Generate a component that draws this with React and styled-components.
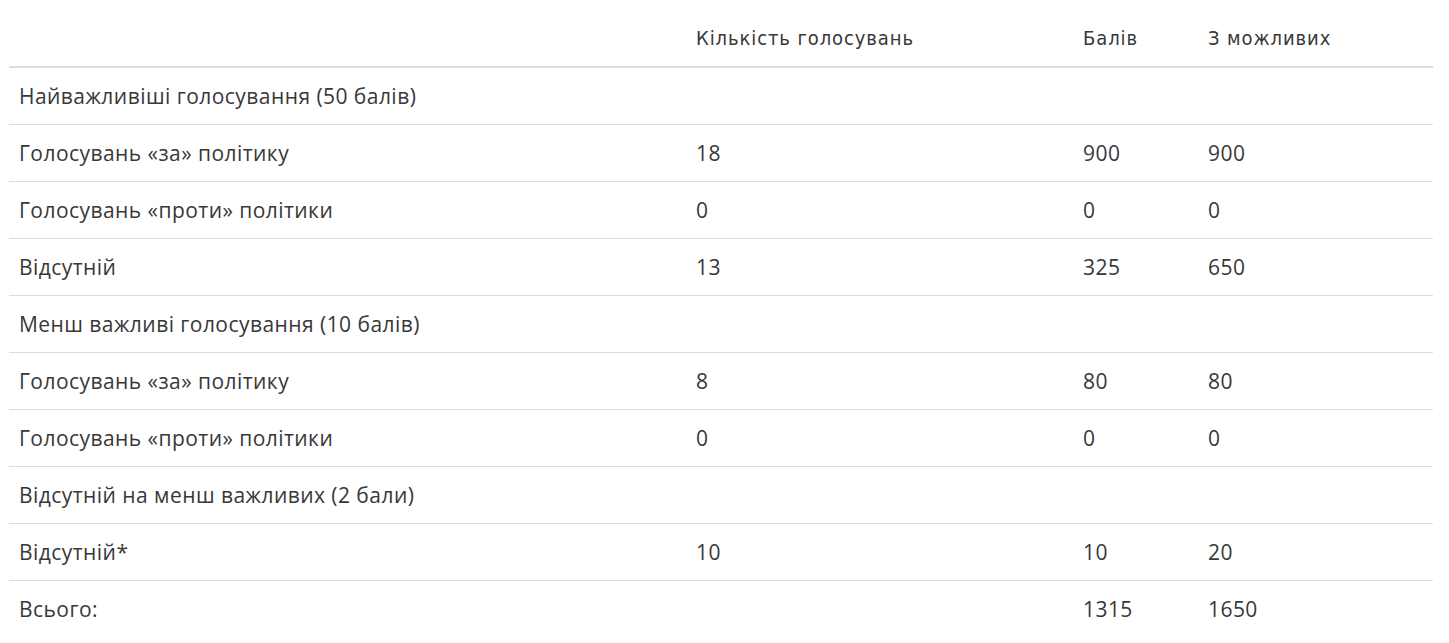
import React from "react";
import styled, { createGlobalStyle } from "styled-components";

const GlobalStyle = createGlobalStyle`
  body {
    margin: 0;
    background: #ffffff;
    font-family: "Open Sans", "Noto Sans", sans-serif;
    color: #383838;
  }
`;

const Wrapper = styled.div`
  padding: 9px 16px 0 9px;
`;

const Table = styled.table`
  width: 1424px;
  border-collapse: collapse;
  table-layout: fixed;
`;

const HeadCell = styled.th`
  text-align: left;
  font-family: "DejaVu Sans Condensed", "Liberation Sans", sans-serif;
  font-weight: normal;
  font-size: 20px;
  letter-spacing: 0.9px;
  color: #383838;
  height: 57px;
  padding: 0 10px;
  vertical-align: middle;
  border-bottom: 2px solid #dddddd;
`;

const Row = styled.tr`
  border-bottom: ${(p) => (p.last ? "none" : "1px solid #dddddd")};
`;

const Cell = styled.td`
  height: 56px;
  padding: 0 10px;
  font-size: 21px;
  letter-spacing: 0.45px;
  vertical-align: middle;
  white-space: nowrap;
`;

const rows = [
  ["Найважливіші голосування (50 балів)", "", "", ""],
  ["Голосувань «за» політику", "18", "900", "900"],
  ["Голосувань «проти» політики", "0", "0", "0"],
  ["Відсутній", "13", "325", "650"],
  ["Менш важливі голосування (10 балів)", "", "", ""],
  ["Голосувань «за» політику", "8", "80", "80"],
  ["Голосувань «проти» політики", "0", "0", "0"],
  ["Відсутній на менш важливих (2 бали)", "", "", ""],
  ["Відсутній*", "10", "10", "20"],
  ["Всього:", "", "1315", "1650"],
];

export default function App() {
  return (
    <>
      <GlobalStyle />
      <Wrapper>
        <Table>
          <colgroup>
            <col style={{ width: 677 }} />
            <col style={{ width: 387 }} />
            <col style={{ width: 125 }} />
            <col />
          </colgroup>
          <thead>
            <tr>
              <HeadCell />
              <HeadCell>Кількість голосувань</HeadCell>
              <HeadCell>Балів</HeadCell>
              <HeadCell>З можливих</HeadCell>
            </tr>
          </thead>
          <tbody>
            {rows.map((r, i) => (
              <Row key={i} last={i === rows.length - 1}>
                {r.map((c, j) => (
                  <Cell key={j}>{c}</Cell>
                ))}
              </Row>
            ))}
          </tbody>
        </Table>
      </Wrapper>
    </>
  );
}
